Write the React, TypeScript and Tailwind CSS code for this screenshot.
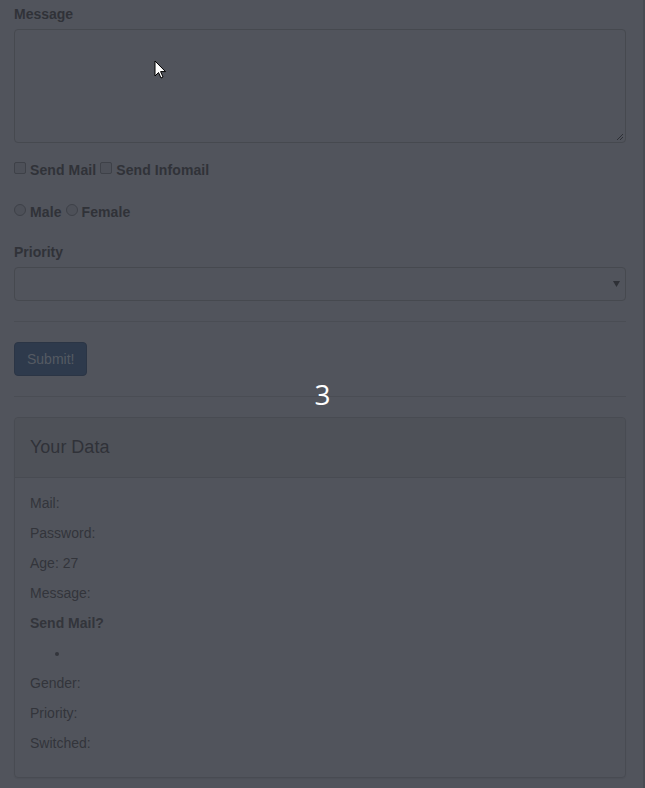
import React from 'react';

const font = { fontFamily: '"Liberation Sans", Arial, sans-serif' };

function Checkbox() {
  return <span className="inline-block w-[12px] h-[12px] mr-[4px] border border-[#3e4148] rounded-[2px] bg-[#4d5058] translate-y-[-2px]" />;
}

function Radio() {
  return <span className="inline-block w-[12px] h-[12px] mr-[4px] border border-[#3e4148] rounded-full bg-[#4d5058] translate-y-[-2px]" />;
}

function Cursor() {
  return (
    <svg className="absolute left-[154px] top-[60px]" width="13" height="20" viewBox="0 0 13 20">
      <path d="M1 1 L1 16 L4.5 12.5 L7 18 L9 17 L6.6 11.6 L11.5 11.6 Z" fill="#fff" stroke="#000" strokeWidth="1" strokeLinejoin="round" />
    </svg>
  );
}

export default function App() {
  return (
    <div className="relative flex w-[645px] h-[788px] overflow-hidden bg-[#51545c] text-[14px] leading-[20px] text-[#303238]" style={font}>
      <div className="flex-1 pt-[4px] pl-[14px]">
        <div className="w-[612px]">
          {/* Message */}
          <div className="mb-[17px]">
            <div className="font-bold mb-[5px]">Message</div>
            <div className="relative h-[114px] rounded-[4px] border border-[#46494f] bg-[#51545c]">
              <svg className="absolute right-[1px] bottom-[1px]" width="8" height="8" viewBox="0 0 8 8">
                <path d="M7 1 L1 7 M7 4 L4 7" stroke="#2e3036" strokeWidth="1" />
              </svg>
            </div>
          </div>

          {/* Checkboxes */}
          <div className="flex items-center h-[20px] font-bold tracking-[0.1px]">
            <Checkbox />
            <span className="mr-[4px]">Send Mail</span>
            <Checkbox />
            <span>Send Infomail</span>
          </div>

          {/* Radios */}
          <div className="flex items-center h-[20px] mt-[22px] font-bold tracking-[0.1px]">
            <Radio />
            <span className="mr-[4px]">Male</span>
            <Radio />
            <span>Female</span>
          </div>

          {/* Priority */}
          <div className="mt-[20px]">
            <div className="font-bold mb-[5px]">Priority</div>
            <div className="relative h-[34px] rounded-[4px] border border-[#46494f] bg-[#51545c]">
              <svg className="absolute right-[5px] top-[13px]" width="7" height="6" viewBox="0 0 7 6">
                <path d="M0 0 L7 0 L3.5 6 Z" fill="#2e3036" />
              </svg>
            </div>
          </div>

          <div className="mt-[20px] border-t border-[#4a4d54]" />

          <div className="mt-[20px]">
            <button className="h-[34px] px-[12px] rounded-[4px] border border-[#2b3545] bg-[#2e3a4c] text-[#555a63]" style={font}>
              Submit!
            </button>
          </div>

          <div className="mt-[20px] border-t border-[#4a4d54]" />

          {/* Panel */}
          <div className="mt-[20px] rounded-[4px] border border-[#484b52] shadow-[0_1px_1px_rgba(0,0,0,0.05)]">
            <div className="h-[60px] flex items-center px-[15px] pb-[2px] bg-[#4e5158] border-b border-[#484b52] rounded-t-[4px]">
              <span className="text-[18px] text-[#303238]">Your Data</span>
            </div>
            <div className="px-[15px] pt-[15px] pb-[14px] text-[#33353b]">
              <p className="mb-[10px]">Mail:</p>
              <p className="mb-[10px]">Password:</p>
              <p className="mb-[10px]">Age: 27</p>
              <p className="mb-[10px]">Message:</p>
              <p className="mb-[10px] font-bold">Send Mail?</p>
              <ul className="mb-[10px] pl-[40px] list-disc">
                <li className="h-[20px]"></li>
              </ul>
              <p className="mb-[10px]">Gender:</p>
              <p className="mb-[10px]">Priority:</p>
              <p className="mb-[10px]">Switched:</p>
            </div>
          </div>
        </div>
      </div>
      <div className="w-[2px] bg-[#484b52]" />

      <Cursor />
      <div className="absolute left-0 right-0 top-[374px] text-center text-[28px] leading-[40px] text-white" style={{ fontFamily: '"Open Sans", "Noto Sans", sans-serif' }}>
        3
      </div>
    </div>
  );
}
